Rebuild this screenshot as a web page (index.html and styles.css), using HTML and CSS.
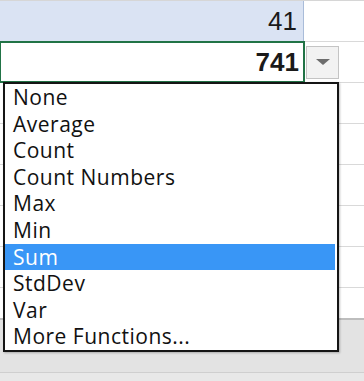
FILE: index.html
```html
<!DOCTYPE html>
<html lang="en">
  <head>
    <meta charset="UTF-8" />
    <title>Total row</title>
    <link rel="stylesheet" href="styles.css">
  </head>

  <body>
    <div id="wrap">
      <!-- grid -->
      <div class="sheet">
        <div class="row">
          <div class="cell total-prev">41</div>
          <div class="cell"></div>
        </div>
        <div class="row">
          <div class="cell active">741</div>
          <div class="cell">
            <a href="javascript:;" class="drop-btn"><span class="tri"></span></a>
          </div>
        </div>
        <div class="row"><div class="cell"></div><div class="cell"></div></div>
        <div class="row"><div class="cell"></div><div class="cell"></div></div>
        <div class="row"><div class="cell"></div><div class="cell"></div></div>
        <div class="row"><div class="cell"></div><div class="cell"></div></div>
        <div class="row"><div class="cell"></div><div class="cell"></div></div>
        <div class="row"><div class="cell"></div><div class="cell"></div></div>
      </div>

      <!-- status / tabs -->
      <div class="status"></div>
      <div class="tabs"></div>

      <!-- dropdown -->
      <ul class="fn-list">
        <li>None</li>
        <li>Average</li>
        <li>Count</li>
        <li>Count Numbers</li>
        <li>Max</li>
        <li>Min</li>
        <li class="selected">Sum</li>
        <li>StdDev</li>
        <li>Var</li>
        <li>More Functions...</li>
      </ul>
    </div>
  </body>
</html>
```

FILE: styles.css
```css
* {
  margin: 0;
  padding: 0;
  box-sizing: border-box;
}

ul {
  list-style: none;
}

body {
  background: #fff;
  font-family: "Liberation Sans", Arial, sans-serif;
  color: #1a1a1a;
}

#wrap {
  position: relative;
  width: 364px;
  height: 381px;
  overflow: hidden;
}

/* grid */
.sheet {
  height: 318px;
  overflow: hidden;
  border-top: 1px solid #d6d6d6;
}

.row {
  display: grid;
  grid-template-columns: 304px 1fr;
  height: 41px;
  border-bottom: 1px solid #d9d9d9;
}

.cell {
  display: flex;
  align-items: center;
  justify-content: flex-end;
  font-size: 26px;
}

.cell a {
  text-decoration: none;
}

.total-prev {
  align-items: flex-end;
  padding: 0 6px 4px 0;
  background-color: #dae3f3;
  border-right: 1px solid #a9bcd9;
}

.active {
  padding-right: 5px;
  font-weight: bold;
  outline: 2px solid #217346;
  outline-offset: -1px;
}

.drop-btn {
  display: flex;
  align-items: center;
  justify-content: center;
  width: 33px;
  height: 33px;
  margin-left: 2px;
  margin-right: auto;
  background-color: #f2f2f2;
  border: 1px solid #c4c4c4;
}

.tri {
  width: 0;
  height: 0;
  border-left: 7px solid transparent;
  border-right: 7px solid transparent;
  border-top: 6px solid #6d6d6d;
}

.status {
  height: 54px;
  background-color: #e3e3e3;
  border-top: 2px solid #bdbdbd;
}

.tabs {
  height: 9px;
  background-color: #e8e8e8;
  border-top: 1px solid #cfcfcf;
}

/* function list */
.fn-list {
  position: absolute;
  left: 3px;
  top: 82px;
  width: 336px;
  background: #fff;
  border: 2px solid #151515;
  box-shadow: 1px 1px 2px rgba(0, 0, 0, 0.25);
  font-family: "Open Sans", sans-serif;
  font-size: 21px;
  letter-spacing: 0.5px;
  color: #111;
}

.fn-list li {
  height: 26.6px;
  line-height: 26px;
  margin-right: 2px;
  padding-left: 8px;
  white-space: nowrap;
}

.fn-list li.selected {
  background-color: #3996f6;
  color: #fff;
}
```
